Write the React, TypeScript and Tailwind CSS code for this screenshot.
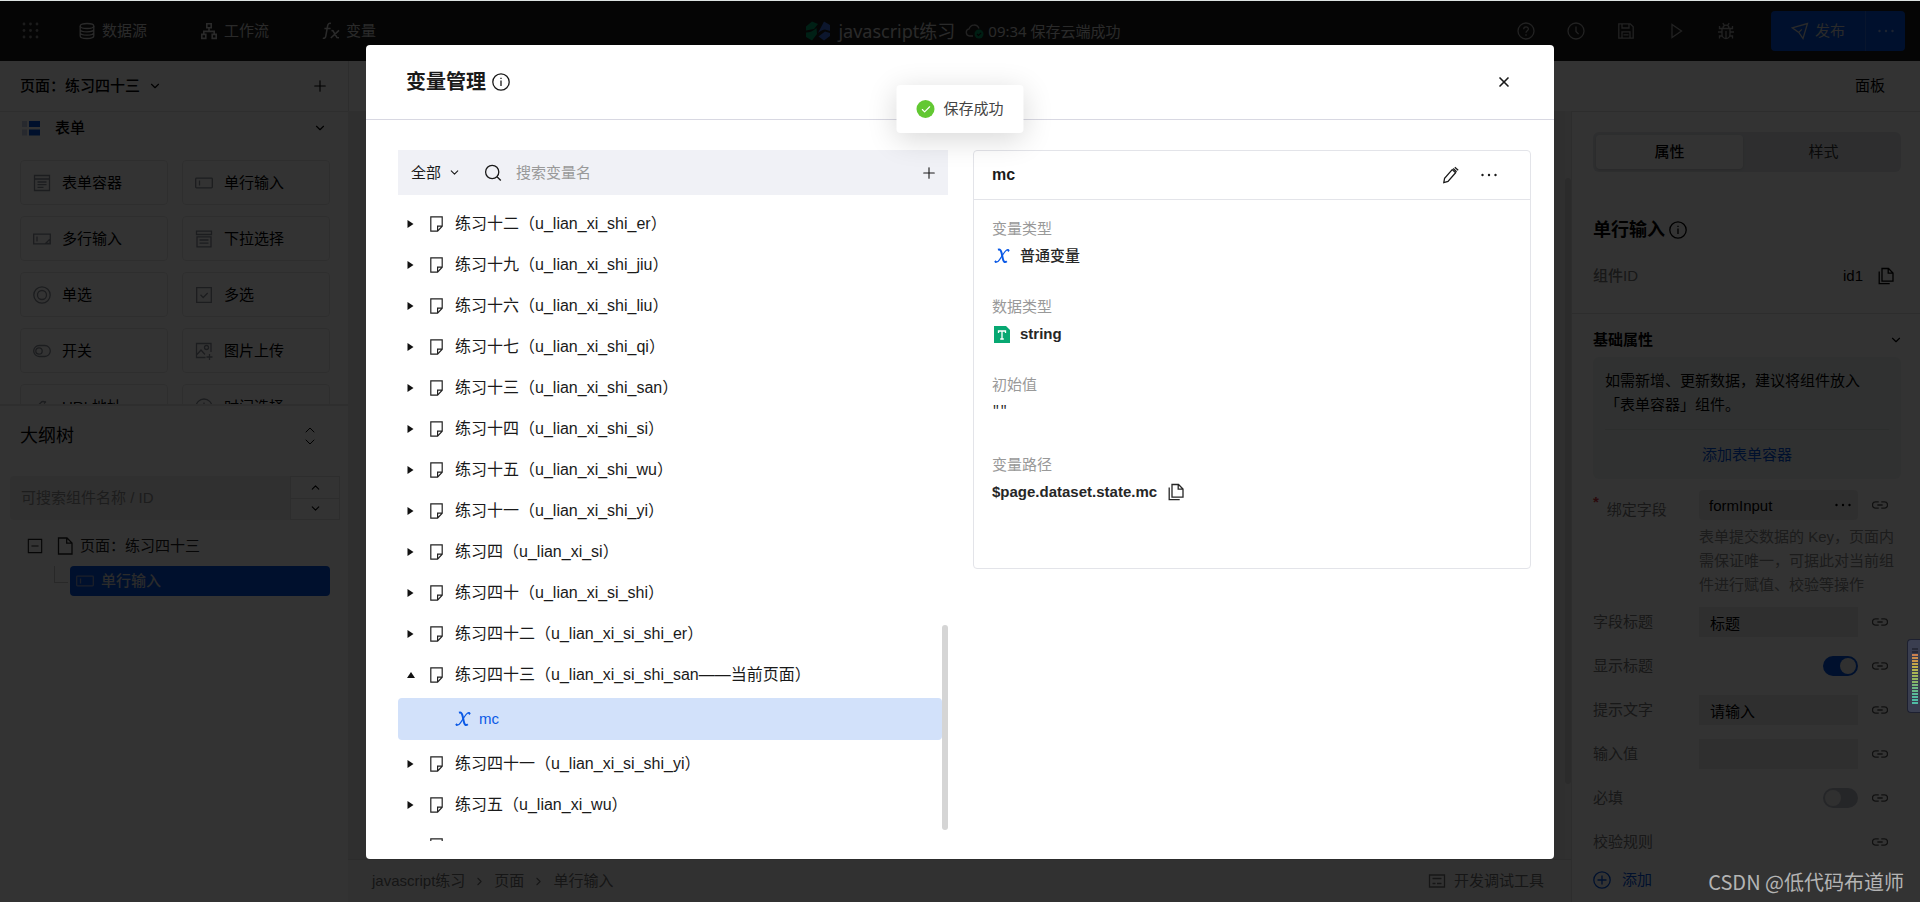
import type { ReactNode } from 'react';
import { Check, ChevronDown, ChevronRight, ChevronUp, Plus, X } from 'lucide-react';

interface IconProps {
  className?: string;
}

interface SvgProps extends IconProps {
  size?: number;
  children: ReactNode;
}

function Svg({ className = '', size = 18, children }: SvgProps) {
  return (
    <svg
      width={size}
      height={size}
      viewBox="0 0 18 18"
      fill="none"
      stroke="currentColor"
      strokeWidth="1.3"
      aria-hidden="true"
      className={`shrink-0 ${className}`}
    >
      {children}
    </svg>
  );
}

const DotsGridIcon = () => (
  <Svg className="text-[#8a8a8a]">
    {[2, 8.5, 15].map((y) =>
      [2, 8.5, 15].map((x) => (
        <circle key={`${x}-${y}`} cx={x} cy={y} r="1.4" fill="currentColor" stroke="none" />
      ))
    )}
  </Svg>
);

const DatabaseIcon = () => (
  <Svg>
    <ellipse cx="9" cy="4" rx="6.8" ry="2.5" />
    <path d="M2.2 4v10c0 1.4 3 2.5 6.8 2.5s6.8-1.1 6.8-2.5V4M2.2 7.4c0 1.4 3 2.4 6.8 2.4s6.8-1 6.8-2.4M2.2 10.8c0 1.4 3 2.4 6.8 2.4s6.8-1 6.8-2.4" />
  </Svg>
);

const WorkflowIcon = () => (
  <Svg>
    <path d="M6.8 1.8h4.4v4H6.8zM1.8 12.4h4v4h-4zM12.2 12.4h4v4h-4zM9 6v3.4M3.8 12.2V9.4h10.4v2.8" strokeWidth="1.6" />
  </Svg>
);

const FxIcon = () => (
  <Svg>
    <path d="M9 1.4C6.8.9 6 2 5.6 4L3.8 14c-.3 1.8-1.2 2.6-3 2.2M2.4 6.6h6.2M9.4 8.6l1.6.2 4 6.8 2 .2M17 8.4l-8.2 7.6" strokeWidth="1.5" />
  </Svg>
);

const LogoIcon = () => (
  <svg width="24" height="20" viewBox="0 0 24 20" aria-hidden="true">
    <path d="M0 5.500 6 .5l6 2.500-4 5L0 9.500z" fill="#00a06a" />
    <path d="M0 11.500c4 0 7-1.500 10.500-4.500L11 13 6 19.500 0 16z" fill="#00a06a" />
    <path d="M18 .5 24 4v6l-5-1.500c-2 0-4.500 1.500-7 3.500z" fill="#3c6ee0" />
    <path d="M12.500 15.500 19 10.500l5 1.500v3l-6 4.500z" fill="#3c6ee0" />
  </svg>
);

const CloudIcon = () => (
  <svg width="19" height="18" viewBox="0 0 19 18" fill="none" aria-hidden="true">
    <path d="M8 14H4.500a3.600 3.600 0 0 1-.4-7.100A5.200 5.200 0 0 1 14 6.400" stroke="#aaa" strokeWidth="1.3" />
    <circle cx="14" cy="12" r="4.500" fill="#00965f" />
    <path d="m12 12 1.500 1.500 2.600-2.700" stroke="#111" strokeWidth="1.2" />
  </svg>
);

const HelpIcon = () => (
  <Svg>
    <circle cx="9" cy="9" r="8" />
    <path d="M6.700 7.200c0-3 4.700-3 4.700-.2 0 1.700-2.400 1.800-2.400 3.800M9 12.300v1.400" />
  </Svg>
);

const ClockIcon = () => (
  <Svg>
    <circle cx="9" cy="9" r="8" />
    <path d="M9 4.500V9.500l2.600 2.600" />
  </Svg>
);

const SaveIcon = () => (
  <Svg>
    <path d="M1.800 1.800h11.400l3 3v11.400H1.800zM5 2v4h7V2M5 16v-6.200h8V16M6.500 12.800h5" />
  </Svg>
);

const PlayIcon = () => (
  <Svg>
    <path d="M5 2.500v13L14.500 9z" />
  </Svg>
);

const BugIcon = () => (
  <Svg>
    <path d="M5 6.500h8v6a4 4 0 0 1-8 0zM6 6.200a3 3 0 0 1 6 0M9 9v7M1 10h4M13 10h4M2.500 4v2.500H5M15.500 4v2.500H13M2.500 16.500V14H5M15.500 16.500V14H13M5.800 1.200l1.400 2M12.200 1.200l-1.400 2" />
  </Svg>
);

const SendIcon = () => (
  <Svg>
    <path d="M1.200 5.800 16.500 1.500 12 16.500 7.800 10.400zM7.800 10.400l3-3" />
  </Svg>
);

const MoreIcon = ({ className }: IconProps) => (
  <Svg className={className}>
    <g fill="currentColor" stroke="none">
      <circle cx="2.500" cy="9" r="1.200" />
      <circle cx="9" cy="9" r="1.200" />
      <circle cx="15.500" cy="9" r="1.200" />
    </g>
  </Svg>
);

const InfoIcon = () => (
  <Svg>
    <circle cx="9" cy="9" r="8.200" />
    <path d="M9 7.500v5.500M9 4.700v1.400" />
  </Svg>
);

const CopyIcon = () => (
  <Svg>
    <path d="M5 1.500h6.500L16 6v8.200H5zM11.200 1.600V6.200H16M2.200 4.500v12.200h10.500" />
  </Svg>
);

const LinkIcon = () => (
  <Svg size={16} className="text-[#555]">
    <path d="M7.600 5.500H4a3.500 3.500 0 0 0 0 7h3.600M10.400 5.500H14a3.500 3.500 0 0 1 0 7h-3.600M6 9h6" strokeWidth="1.5" />
  </Svg>
);

const PencilIcon = () => (
  <Svg>
    <path d="M1.800 16.600l.8-4.400L10.200 3.600l3.400 3.100L6 15.500zM11.200 2.600l3.400 3.100M12.800 1.200l3.400 3" />
  </Svg>
);

const SearchIcon = () => (
  <Svg>
    <circle cx="8.200" cy="8" r="6.600" />
    <path d="m13 12.700 3.800 3.800" />
  </Svg>
);

const PageIcon = () => (
  <svg width="13" height="16" viewBox="0 0 13 16" fill="none" stroke="#222" strokeWidth="1.200" aria-hidden="true" className="shrink-0">
    <path d="M.8.800h11.400v9.400l-4.600 5H.8zM7.600 15v-4.800h4.400" />
  </svg>
);

const VariableIcon = () => (
  <svg width="16" height="16" viewBox="0 0 16 16" fill="none" stroke="#0a59e6" aria-hidden="true" className="shrink-0">
    <path d="M4 1.800c2-.8 3 .6 3.600 3.200l1.200 5.500c.6 3 1.800 4.600 4 2.800" strokeWidth="2" />
    <path d="M15 2.200c-1.800-1.300-3.400.2-5.200 3L5.600 11.600c-1.400 2.200-3 3.200-4.600 2.200" strokeWidth="1.200" />
    <circle cx="14.400" cy="2.600" r=".7" fill="#0a59e6" />
    <circle cx="1.600" cy="13.600" r=".7" fill="#0a59e6" />
  </svg>
);

const StringIcon = () => (
  <svg width="16" height="17" viewBox="0 0 16 17" aria-hidden="true" className="shrink-0">
    <path d="M0 0h12l4 4v13H0z" fill="#07a872" />
    <path d="M4.500 7V5h7v2M8 5v8M6.200 13h3.600" fill="none" stroke="#fff" strokeWidth="1.300" />
  </svg>
);

const FormIcon = () => (
  <svg width="18" height="15" viewBox="0 0 18 15" aria-hidden="true" className="ml-0.5">
    <path d="M0 0h5v6H0zM0 8.500h5v6H0z" fill="#c2cbe4" />
    <path d="M7 0h11v6H7zM7 8.500h11v6H7z" fill="#0052d9" />
  </svg>
);

const SingleInputIcon = ({ className }: IconProps) => (
  <Svg className={className}>
    <rect x=".700" y="4.200" width="16.600" height="9.600" rx=".8" />
    <path d="M4.500 6.500v5" />
  </Svg>
);

// palette of form widgets in the left panel
const WIDGETS: { name: string; icon: ReactNode }[] = [
  { name: '表单容器', icon: <Svg><path d="M1.500 1.500h15v15h-15zM1.500 5h15M4.500 8h9M4.500 10.700h9M4.500 13.400h6" /></Svg> },
  { name: '单行输入', icon: <SingleInputIcon /> },
  { name: '多行输入', icon: <Svg><path d="M.7 4.200h16.600v9.600H.7zM4 6.500v5M12.500 13.500l4.500-4.500v4.500z" /></Svg> },
  { name: '下拉选择', icon: <Svg><path d="M1.500 1.200h15v3.300h-15zM2 6.800h14v10H2zM4.500 10h9M4.500 13.200h9" /></Svg> },
  { name: '单选', icon: <Svg><circle cx="9" cy="9" r="8.200" /><circle cx="9" cy="9" r="4.500" /></Svg> },
  { name: '多选', icon: <Svg><path d="M1.700 1.700h14.600v14.600H1.700zM5.500 8.800l2.700 2.700 4.500-4.500" /></Svg> },
  { name: '开关', icon: <Svg><rect x=".7" y="3.500" width="16.600" height="11" rx="5.500" /><circle cx="6" cy="9" r="3.200" /></Svg> },
  { name: '图片上传', icon: <Svg><path d="M10.500 15.500H1.500v-14h14.500V10M2 12.500l4-4.500 4 4.500M14.500 12v6M11.500 15h6" /><circle cx="11.500" cy="5.500" r="2" /></Svg> },
  { name: 'URL地址', icon: <Svg><path d="M7 12.500 4.800 14.800a2.500 2.500 0 0 1-3.600-3.600L8 4.500a2.500 2.500 0 0 1 4 0M11 5.500l2-2" /></Svg> },
  { name: '时间选择', icon: <ClockIcon /> },
];

interface PageNode {
  name: string;
  id: string;
  variables?: string[];
}

const PAGES: PageNode[] = [
  { name: '练习十二', id: 'u_lian_xi_shi_er' },
  { name: '练习十九', id: 'u_lian_xi_shi_jiu' },
  { name: '练习十六', id: 'u_lian_xi_shi_liu' },
  { name: '练习十七', id: 'u_lian_xi_shi_qi' },
  { name: '练习十三', id: 'u_lian_xi_shi_san' },
  { name: '练习十四', id: 'u_lian_xi_shi_si' },
  { name: '练习十五', id: 'u_lian_xi_shi_wu' },
  { name: '练习十一', id: 'u_lian_xi_shi_yi' },
  { name: '练习四', id: 'u_lian_xi_si' },
  { name: '练习四十', id: 'u_lian_xi_si_shi' },
  { name: '练习四十二', id: 'u_lian_xi_si_shi_er' },
  { name: '练习四十三', id: 'u_lian_xi_si_shi_san——当前页面', variables: ['mc'] },
  { name: '练习四十一', id: 'u_lian_xi_si_shi_yi' },
  { name: '练习五', id: 'u_lian_xi_wu' },
];

function Header() {
  return (
    <header className="grid h-[60px] shrink-0 grid-cols-[1fr_auto_1fr] items-center bg-[#1a1a1a] pl-[22px] pr-[15px] text-[#d0d0d0]">
      <div className="flex items-center">
        <button aria-label="应用">
          <DotsGridIcon />
        </button>
        <nav className="ml-[38px] flex gap-[53px]">
          <a href="#data" className="flex items-center gap-1.5">
            <DatabaseIcon />
            数据源
          </a>
          <a href="#flow" className="flex items-center gap-1.5">
            <WorkflowIcon />
            工作流
          </a>
          <a href="#vars" className="flex items-center gap-1.5">
            <FxIcon />
            变量
          </a>
        </nav>
      </div>
      <div className="flex items-center font-['Noto_Sans','Noto_Sans_CJK_SC',sans-serif]">
        <LogoIcon />
        <span className="ml-2 text-[18px] leading-7">javascript练习</span>
        <span className="ml-2.5 flex items-center gap-1">
          <CloudIcon />
          09:34 保存云端成功
        </span>
      </div>
      <div className="flex items-center justify-end text-[#a8a8a8]">
        <div className="mr-9 flex gap-8">
          <button aria-label="帮助"><HelpIcon /></button>
          <button aria-label="历史"><ClockIcon /></button>
          <button aria-label="保存"><SaveIcon /></button>
          <button aria-label="预览"><PlayIcon /></button>
          <button aria-label="调试"><BugIcon /></button>
        </div>
        <div className="flex h-10 overflow-hidden rounded bg-[#0052e0] text-[#d0d0d0]">
          <button className="flex w-[94px] items-center justify-center gap-1.5">
            <SendIcon />
            发布
          </button>
          <button aria-label="更多发布选项" className="flex w-10 items-center justify-center border-l border-[#2a6ae0]">
            <MoreIcon className="text-[#8fb0ee]" />
          </button>
        </div>
      </div>
    </header>
  );
}

function LeftPanel() {
  return (
    <aside className="flex w-[348px] shrink-0 flex-col bg-white text-black">
      <div className="flex h-[51px] shrink-0 items-center border-b border-[#e4e4e4] pl-5 pr-[19px]">
        <button className="flex items-center gap-2 font-medium">
          页面：练习四十三
          <ChevronDown size={14} />
        </button>
        <button aria-label="新建页面" className="ml-auto">
          <Plus size={18} strokeWidth={1.5} />
        </button>
      </div>
      <div className="h-[292px] shrink-0 overflow-hidden pl-5 pr-[18px]">
        <button className="flex h-8 w-full items-center font-medium">
          <FormIcon />
          <span className="ml-[15px]">表单</span>
          <ChevronDown size={14} className="ml-auto mr-[3px]" />
        </button>
        <div className="mt-4 grid grid-cols-2 gap-x-3.5 gap-y-[11px]">
          {WIDGETS.map((w) => (
            <button key={w.name} className="flex h-[45px] items-center gap-[11px] rounded border border-[#e6e6e6] pl-3">
              <span className="text-[#8a8f99]">{w.icon}</span>
              {w.name}
            </button>
          ))}
        </div>
      </div>
      <div className="flex flex-1 flex-col border-t-2 border-[#e6e6e6]">
        <div className="flex h-[60px] items-center justify-between pl-5 pr-[30px] text-[18px]">
          大纲树
          <button aria-label="展开大纲树" className="flex flex-col">
            <ChevronUp size={16} strokeWidth={1.5} className="-mb-1" />
            <ChevronDown size={16} strokeWidth={1.5} />
          </button>
        </div>
        <div className="mt-2.5 flex h-11 pl-2.5 pr-2">
          <input
            aria-label="搜索组件"
            placeholder="可搜索组件名称 / ID"
            className="min-w-0 flex-1 rounded-l bg-[#f0f0f0] px-[11px] placeholder:text-[#8f8f8f]"
          />
          <div className="flex w-[50px] flex-col divide-y divide-[#dedede] border border-[#dedede]">
            <button aria-label="上一个" className="flex flex-1 items-center justify-center"><ChevronUp size={13} /></button>
            <button aria-label="下一个" className="flex flex-1 items-center justify-center"><ChevronDown size={13} /></button>
          </div>
        </div>
        <div className="mt-3 flex h-7 items-center pl-[27px] text-[#222]">
          <Svg size={16}><path d="M1.500 1.500h15v15h-15zM5 9h8" /></Svg>
          <Svg className="ml-[13px]"><path d="M2.500 1h8.500l5 5v11H2.500zM10.700 1.200V6.200h5" /></Svg>
          <span className="ml-1.5">页面：练习四十三</span>
        </div>
        <div className="mt-1.5 flex pl-[54px] pr-[18px]">
          <div className="mr-0.5 h-[17px] w-3.5 border-b border-l border-[#c8c8c8]" />
          <button className="flex h-[30px] flex-1 items-center gap-[7px] rounded-sm bg-[#0052e0] pl-1.5 font-medium text-[#d8d8d8]">
            <SingleInputIcon className="text-[#8a9cc8]" />
            单行输入
          </button>
        </div>
      </div>
    </aside>
  );
}

interface FieldRowProps {
  label: string;
  children?: ReactNode;
}

function FieldRow({ label, children }: FieldRowProps) {
  return (
    <div className="flex h-[30px] items-center">
      <label className="flex min-w-0 flex-1 items-center">
        <span className="w-[106px] shrink-0 text-[#777]">{label}</span>
        {children}
      </label>
      <button aria-label={`绑定${label}`} className="ml-3.5 mr-[13px] shrink-0">
        <LinkIcon />
      </button>
    </div>
  );
}

function Switch({ on = false }: { on?: boolean }) {
  return (
    <span className="relative ml-auto flex h-5 w-[35px]">
      <input
        type="checkbox"
        role="switch"
        defaultChecked={on}
        className="peer h-5 w-[35px] appearance-none rounded-full bg-[#b9bdc8] checked:bg-[#0052e0]"
      />
      <span className="absolute left-0.5 top-0.5 h-4 w-4 rounded-full bg-[#efefef] peer-checked:left-[17px]" />
    </span>
  );
}

const fieldInput = 'h-[30px] w-full min-w-0 flex-1 bg-[#ececec] px-[11px]';

function RightPanel() {
  return (
    <aside className="w-[349px] shrink-0 overflow-hidden border-l border-t border-[#e2e2e2] bg-white pl-[21px] pr-[19px] pt-5 text-black">
      <div className="flex h-10 rounded-md bg-[#e3e6ea] px-[3px] py-[3px]">
        <button className="w-[147px] rounded-sm bg-white font-medium shadow-sm">属性</button>
        <button className="flex-1 pl-1.5 text-[#333]">样式</button>
      </div>
      <h2 className="mt-[45px] flex h-[26px] items-center gap-1 text-[18px] font-bold">
        单行输入
        <InfoIcon />
      </h2>
      <div className="mt-[19px] flex h-7 items-center">
        <span className="font-medium text-[#777]">组件ID</span>
        <span className="ml-auto">id1</span>
        <button aria-label="复制组件ID" className="ml-3.5 mr-1.5"><CopyIcon /></button>
      </div>
      <div className="-ml-[21px] -mr-[19px] mt-[23px] border-t border-[#e0e0e0]" />
      <button className="flex h-[43px] w-full items-center justify-between pt-2 font-bold">
        基础属性
        <ChevronDown size={14} className="-mr-0.5" />
      </button>
      <div className="rounded-md bg-[#f0f5f3] px-3 pt-3">
        <p className="leading-6">
          如需新增、更新数据，建议将组件放入
          <br />
          「表单容器」组件。
        </p>
        <a href="#container" className="mt-3 flex h-[50px] items-center justify-center border-t border-[#dde4e0] text-[#0052e0]">
          添加表单容器
        </a>
      </div>
      <div className="mt-[11px] flex items-start">
        <label htmlFor="bind-field" className="flex h-10 w-[106px] shrink-0 items-center text-[#777]">
          <span className="mr-2 self-start font-bold text-[#d5353f]">*</span>
          绑定字段
        </label>
        <div className="flex h-[30px] min-w-0 flex-1 items-center rounded-sm bg-[#ececec] pr-1.5">
          <input id="bind-field" defaultValue="formInput" className="h-[30px] min-w-0 flex-1 bg-transparent pl-2.5" />
          <MoreIcon />
        </div>
        <button aria-label="绑定字段" className="ml-3.5 mr-[13px] mt-[7px]"><LinkIcon /></button>
      </div>
      <p className="-mt-[5px] pl-[106px] leading-6 text-[#8a8a8a]">表单提交数据的 Key，页面内需保证唯一，可据此对当前组件进行赋值、校验等操作</p>
      <div className="mt-2.5 flex flex-col gap-3.5">
        <FieldRow label="字段标题">
          <input defaultValue="标题" className={fieldInput} />
        </FieldRow>
        <FieldRow label="显示标题">
          <Switch on />
        </FieldRow>
        <FieldRow label="提示文字">
          <input defaultValue="请输入" className={fieldInput} />
        </FieldRow>
        <FieldRow label="输入值">
          <input className={fieldInput} />
        </FieldRow>
        <FieldRow label="必填">
          <Switch />
        </FieldRow>
        <FieldRow label="校验规则" />
      </div>
      <button className="mt-2 flex h-[30px] items-center gap-[11px] text-[#0052e0]">
        <Svg><circle cx="9" cy="9" r="8.200" /><path d="M9 4.500v9M4.500 9h9" /></Svg>
        添加
      </button>
    </aside>
  );
}

function Canvas() {
  return (
    <main className="flex min-w-0 flex-1 flex-col">
      <div className="flex min-h-0 flex-1">
        <div className="flex-1 bg-[#e9e9ec]" />
        <div className="w-1.5 bg-[#f0f0f0]">
          <div className="mt-[67px] h-[606px] rounded-full bg-[#d6d6d6]" />
        </div>
      </div>
      <footer className="flex h-[43px] shrink-0 items-center border-t border-[#dcdcdc] bg-[#f5f5f5] pl-6 pr-[27px] text-[#6e6e6e]">
        <nav className="flex items-center gap-2">
          <a href="#app">javascript练习</a>
          <ChevronRight size={13} />
          <a href="#page">页面</a>
          <ChevronRight size={13} />
          <a href="#input">单行输入</a>
        </nav>
        <button className="ml-auto flex items-center gap-2">
          <Svg><path d="M1.500 3h15v12h-15zM4.500 6.500h9M4.500 11.500h3M9 11.500h4.500" /></Svg>
          开发调试工具
        </button>
      </footer>
    </main>
  );
}

function PageRow({ page }: { page: PageNode }) {
  return (
    <li>
      <button className="flex h-[41px] w-full items-center pl-[9px] text-left text-[16px]">
        <svg width="8" height="8" viewBox="0 0 8 8" aria-hidden="true" className="mr-[15px] shrink-0">
          <path d={page.variables ? 'M0 7h8L4 1z' : 'M.5 0v8l6-4z'} fill="#111" />
        </svg>
        <PageIcon />
        <span className="ml-3 whitespace-nowrap">
          {page.name}（{page.id}）
        </span>
      </button>
      {page.variables?.map((v) => (
        <button key={v} className="mb-[3px] mt-[3px] flex h-[42px] w-full items-center gap-2 rounded bg-[#d2e1fa] pl-[57px] text-[#0a59e6]">
          <VariableIcon />
          {v}
        </button>
      ))}
    </li>
  );
}

function VariableList() {
  return (
    <section className="flex min-h-0 flex-1 basis-0 flex-col">
      <div className="flex h-[45px] shrink-0 items-center bg-[#f0f1f6] pl-[13px] pr-2.5">
        <div className="relative flex items-center">
          <select aria-label="变量范围" className="w-[52px] appearance-none bg-transparent">
            <option>全部</option>
          </select>
          <ChevronDown size={13} className="pointer-events-none absolute right-0.5" />
        </div>
        <label className="ml-[21px] flex flex-1 items-center gap-3.5">
          <SearchIcon />
          <input aria-label="搜索变量名" placeholder="搜索变量名" className="flex-1 bg-transparent placeholder:text-[#999]" />
        </label>
        <button aria-label="新建变量">
          <Plus size={18} strokeWidth={1.5} />
        </button>
      </div>
      <div className="flex min-h-0 flex-1">
        <ul className="min-w-0 flex-1 overflow-hidden pt-2">
          {PAGES.map((page) => (
            <PageRow key={page.id} page={page} />
          ))}
          <li className="flex h-[41px] items-center pl-8">
            <PageIcon />
          </li>
        </ul>
        <div className="flex w-1.5 flex-col justify-end pb-[11px]">
          <div className="h-[205px] rounded-full bg-[#d5d5d5]" />
        </div>
      </div>
    </section>
  );
}

interface DetailProps {
  label: string;
  children: ReactNode;
}

function Detail({ label, children }: DetailProps) {
  return (
    <div className="mb-[26px]">
      <dt className="h-[26px] leading-6 text-[#999]">{label}</dt>
      <dd className="flex min-h-[26px] items-center font-bold text-[#262626]">{children}</dd>
    </div>
  );
}

function VariableDetail() {
  return (
    <section className="h-[419px] flex-1 basis-2 rounded border border-[#e3e4e9]">
      <div className="flex h-[49px] items-center border-b border-[#e3e4e9] pl-[18px] pr-8">
        <h3 className="text-[16px] font-bold">mc</h3>
        <button aria-label="编辑" className="ml-auto"><PencilIcon /></button>
        <button aria-label="更多" className="ml-5"><MoreIcon /></button>
      </div>
      <dl className="px-[18px] pt-[17px]">
        <Detail label="变量类型">
          <span className="ml-0.5 mr-2.5"><VariableIcon /></span>
          <span className="font-medium">普通变量</span>
        </Detail>
        <Detail label="数据类型">
          <span className="ml-0.5 mr-2.5"><StringIcon /></span>
          string
        </Detail>
        <Detail label="初始值">
          <code className="pb-1 font-['Liberation_Mono',monospace] text-[13px] font-normal">""</code>
        </Detail>
        <Detail label="变量路径">
          $page.dataset.state.mc
          <button aria-label="复制变量路径" className="ml-2.5"><CopyIcon /></button>
        </Detail>
      </dl>
    </section>
  );
}

function VariableDialog() {
  return (
    <div
      role="dialog"
      aria-label="变量管理"
      className="flex h-full w-full max-w-[1188px] flex-col overflow-hidden rounded bg-white text-[#1a1a1a]"
    >
      <div className="flex h-[75px] shrink-0 items-center border-b border-[#d8d8e2] pl-10 pr-[42px]">
        <h1 className="text-[20px] font-bold">变量管理</h1>
        <span className="ml-1.5"><InfoIcon /></span>
        <button aria-label="关闭" className="ml-auto">
          <X size={16} strokeWidth={2.500} />
        </button>
      </div>
      <div className="flex min-h-0 flex-1 gap-[25px] pb-[18px] pl-8 pr-[23px] pt-[30px]">
        <VariableList />
        <VariableDetail />
      </div>
    </div>
  );
}

const METER = [
  'bg-[#262937]', 'bg-[#262937]', 'bg-[#c98050]', 'bg-[#c98c4a]', 'bg-[#c9964a]', 'bg-[#c4a548]', 'bg-[#bfb048]',
  'bg-[#b3b450]', 'bg-[#a9b454]', 'bg-[#9fb458]', 'bg-[#94b660]', 'bg-[#8ab766]', 'bg-[#78b978]', 'bg-[#6cb984]',
  'bg-[#66b98a]', 'bg-[#5abb98]', 'bg-[#54bba0]', 'bg-[#4fbca4]', 'bg-[#4fbca4]',
];

export default function App() {
  return (
    <div className="flex h-screen flex-col overflow-hidden bg-[#dde3e2] pt-px font-['Liberation_Sans','Noto_Sans_CJK_SC',sans-serif] text-[15px] leading-6">
      <div className="relative flex min-h-0 flex-1 flex-col">
        <Header />
        <div className="flex min-h-0 flex-1">
          <LeftPanel />
          <div className="flex min-w-0 flex-1 flex-col">
            <div className="flex h-[50px] shrink-0 items-center justify-end border-l border-[#e0e0e0] bg-white pr-[35px]">
              <button>面板</button>
            </div>
            <div className="flex min-h-0 flex-1">
              <Canvas />
              <RightPanel />
            </div>
          </div>
        </div>

        <div className="absolute inset-0 flex justify-center bg-black/80 pb-[43px] pt-11">
          <VariableDialog />
        </div>

        <div
          role="status"
          className="absolute left-1/2 top-[84px] flex h-12 -translate-x-1/2 items-center gap-[9px] rounded-sm bg-white px-5 text-[#444] shadow-[0_6px_30px_rgba(0,0,0,0.16)]"
        >
          <span className="flex h-[18px] w-[18px] items-center justify-center rounded-full bg-[#62c832] text-white">
            <Check size={11} strokeWidth={2.500} />
          </span>
          保存成功
        </div>

        <div className="absolute right-0 top-[638px] flex h-[74px] w-[13px] flex-col items-end gap-px rounded-l border border-r-0 border-[#1d2030] bg-[#3a3e50] pr-0.5 pt-2">
          {METER.map((color, i) => (
            <span key={i} className={`h-0.5 w-1.5 ${color}`} />
          ))}
        </div>

        <div className="absolute bottom-1.5 right-4 font-['Noto_Sans_CJK_SC',sans-serif] text-[20px] leading-7 text-[#b4b4b4]">
          CSDN @低代码布道师
        </div>
      </div>
    </div>
  );
}
